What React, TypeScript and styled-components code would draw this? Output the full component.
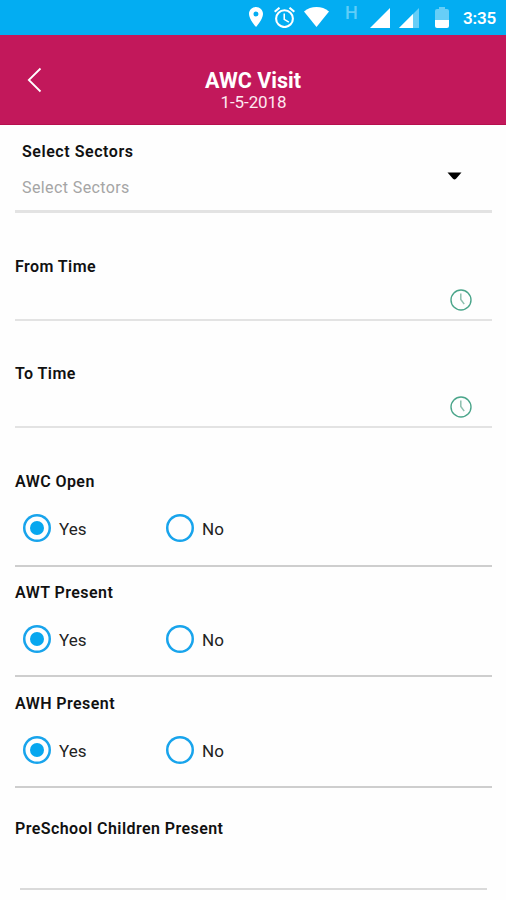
import React from "react";
import styled, { createGlobalStyle } from "styled-components";

const GlobalStyle = createGlobalStyle`
  * { box-sizing: border-box; }
  body { margin: 0; background: #fefefe; font-family: Roboto, "Liberation Sans", sans-serif; color: #111; }
`;

const Screen = styled.main`
  width: 506px;
  height: 900px;
  overflow: hidden;
  display: flex;
  flex-direction: column;
`;

const StatusBar = styled.div`
  height: 35px;
  flex: none;
  display: flex;
  align-items: flex-start;
  padding-left: 249px;
  background: #03adf2;
  color: #fff;
`;

const StatusIcon = styled.svg<{ $top: number; $gap: number }>`
  display: block;
  flex: none;
  margin-top: ${(p) => p.$top}px;
  margin-right: ${(p) => p.$gap}px;
`;

const NetworkType = styled.span`
  width: 12px;
  margin: 4px 13px 0 0;
  font-size: 18px;
  line-height: 18px;
  font-weight: 500;
  color: #60cdf8;
`;

const ClockText = styled.span`
  margin-top: 8px;
  font-size: 17px;
  line-height: 20px;
  font-weight: 600;
  letter-spacing: -0.2px;
`;

const Header = styled.header`
  height: 90px;
  flex: none;
  display: grid;
  grid-template-columns: 60px 1fr 60px;
  background: #c2185b;
  border-bottom: 1px solid #b60f4e;
  color: #fff;
`;

const BackButton = styled.button`
  padding: 32px 0 0 27px;
  border: 0;
  background: none;
  display: flex;
  align-items: flex-start;
`;

const Heading = styled.div`
  padding-top: 33px;
  text-align: center;
`;

const Title = styled.h1`
  margin: 0;
  font-size: 21.5px;
  line-height: 25px;
  font-weight: 700;
`;

const Subtitle = styled.div`
  padding-left: 1px;
  font-size: 17px;
  line-height: 18px;
  letter-spacing: -0.1px;
  color: #fde9f0;
`;

const Field = styled.section<{
  $height: number;
  $top: number;
  $line: string;
  $thick?: number;
  $left?: number;
  $right?: number;
  $pad?: number;
}>`
  flex: none;
  height: ${(p) => p.$height}px;
  margin: 0 ${(p) => p.$right ?? 14}px 0 ${(p) => p.$left ?? 15}px;
  padding: ${(p) => p.$top}px 0 0 ${(p) => p.$pad ?? 0}px;
  border-bottom: ${(p) => p.$thick ?? 2}px solid ${(p) => p.$line};
`;

const Label = styled.div<{ $outdent?: number; $spacing?: number }>`
  margin-left: -${(p) => p.$outdent ?? 0}px;
  font-size: 16px;
  line-height: 20px;
  font-weight: 600;
  letter-spacing: ${(p) => p.$spacing ?? 0.43}px;
  white-space: nowrap;
`;

const SelectRow = styled.div`
  display: flex;
  justify-content: space-between;
  padding: 8px 30px 0 0;
`;

const Placeholder = styled.span`
  padding-top: 8px;
  font-size: 16px;
  line-height: 20px;
  letter-spacing: 0.4px;
  color: #a5a5a5;
`;

const Caret = styled.svg`
  display: block;
  margin-top: 2px;
`;

const TimeRow = styled.div`
  display: flex;
  justify-content: flex-end;
  padding: 11px 19px 0 0;
`;

const Options = styled.div`
  display: flex;
  padding: 22px 0 0 8px;
`;

const Option = styled.div`
  width: 143px;
  display: flex;
  align-items: center;
  gap: 8px;
`;

const RadioRing = styled.span`
  width: 28px;
  height: 28px;
  flex: none;
  border-radius: 50%;
  box-shadow: inset 0 0 0 2.5px #18a4ec;
  display: flex;
  align-items: center;
  justify-content: center;
`;

const RadioDot = styled.span`
  width: 14px;
  height: 14px;
  border-radius: 50%;
  background: #07a7ef;
`;

const OptionText = styled.span`
  padding-top: 2px;
  font-size: 17px;
  line-height: 20px;
  color: #222;
`;

const ClockIcon = () => (
  <svg width="24" height="24" viewBox="0 0 24 24" fill="none">
    <circle cx="12" cy="12" r="10" stroke="#4aa58a" strokeWidth="1.4" />
    <path d="M11.8 5.5v6l3.4 4.6" stroke="#8dbfae" strokeWidth="1.5" />
  </svg>
);

const TimeField = ({ label, height, top }: { label: string; height: number; top: number }) => (
  <Field $height={height} $top={top} $line="#e3e3e3">
    <Label>{label}</Label>
    <TimeRow>
      <ClockIcon />
    </TimeRow>
  </Field>
);

const ChoiceField = ({ label, height, top }: { label: string; height: number; top: number }) => (
  <Field $height={height} $top={top} $line="#cecece">
    <Label>{label}</Label>
    <Options>
      <Option>
        <RadioRing>
          <RadioDot />
        </RadioRing>
        <OptionText>Yes</OptionText>
      </Option>
      <Option>
        <RadioRing />
        <OptionText>No</OptionText>
      </Option>
    </Options>
  </Field>
);

export default function App() {
  return (
    <>
      <GlobalStyle />
      <Screen>
        <StatusBar>
          <StatusIcon $top={7} $gap={11} width="14" height="20" viewBox="5 2 14 20" fill="#fff">
            <path d="M12 2C8.13 2 5 5.13 5 9c0 5.25 7 13 7 13s7-7.75 7-13c0-3.87-3.13-7-7-7zm0 9.5a2.5 2.5 0 1 1 0-5 2.5 2.5 0 0 1 0 5z" />
          </StatusIcon>
          <StatusIcon $top={7} $gap={9} width="21" height="21" viewBox="2 1.9 20 20" fill="#fff">
            <path d="M22 5.72l-4.6-3.86-1.29 1.53 4.6 3.86L22 5.72zM7.88 3.39L6.6 1.86 2 5.71l1.29 1.53 4.59-3.85zM12.5 8H11v6l4.75 2.85.75-1.23-4-2.37V8zM12 4a9 9 0 1 0 0 18 9 9 0 0 0 0-18zm0 16a7 7 0 1 1 0-14 7 7 0 0 1 0 14z" />
          </StatusIcon>
          <StatusIcon $top={7} $gap={16} width="25" height="20" viewBox="0 0 25 20" fill="#fff">
            <path d="M12.5 20 0 4.5C7-1.4 18-1.4 25 4.5z" />
          </StatusIcon>
          <NetworkType>H</NetworkType>
          <StatusIcon $top={8} $gap={9} width="20" height="20" viewBox="0 0 20 20" fill="#fff">
            <path d="M0 20 20 0v20z" />
          </StatusIcon>
          <StatusIcon $top={8} $gap={16} width="20" height="20" viewBox="0 0 20 20" fill="#fff">
            <path d="M0 20 20 0v20z" opacity=".4" />
            <path d="M0 20 14 6v14z" />
          </StatusIcon>
          <StatusIcon $top={7} $gap={14} width="14" height="21" viewBox="0 0 14 21" fill="#fff">
            <path d="M0 13V4q0-2 2-2h2V0h6v2h2q2 0 2 2v9z" opacity=".4" />
            <path d="M0 13h14v6q0 2-2 2H2q-2 0-2-2z" />
          </StatusIcon>
          <ClockText>3:35</ClockText>
        </StatusBar>

        <Header>
          <BackButton aria-label="Back">
            <svg width="15" height="26" viewBox="0 0 15 26" fill="none" stroke="#fff" strokeWidth="1.8">
              <path d="M13.5 1.5 1.8 13l11.7 11.5" />
            </svg>
          </BackButton>
          <Heading>
            <Title>AWC Visit</Title>
            <Subtitle>1-5-2018</Subtitle>
          </Heading>
        </Header>

        <Field $height={88} $top={17} $pad={7} $thick={3} $line="#e3e3e3">
          <Label $spacing={0.55}>Select Sectors</Label>
          <SelectRow>
            <Placeholder>Select Sectors</Placeholder>
            <Caret width="15" height="8" viewBox="0 0 15 8">
              <path d="M.5.5h14L9 6.8q-1.5 1.2-3 0z" fill="#000" />
            </Caret>
          </SelectRow>
        </Field>
        <TimeField label="From Time" height={108} top={44} />
        <TimeField label="To Time" height={107} top={43} />
        <ChoiceField label="AWC Open" height={139} top={44} />
        <ChoiceField label="AWT Present" height={110} top={16} />
        <ChoiceField label="AWH Present" height={111} top={17} />
        <Field $height={102} $top={31} $left={20} $right={19} $line="#dadada">
          <Label $outdent={5}>PreSchool Children Present</Label>
        </Field>
      </Screen>
    </>
  );
}
